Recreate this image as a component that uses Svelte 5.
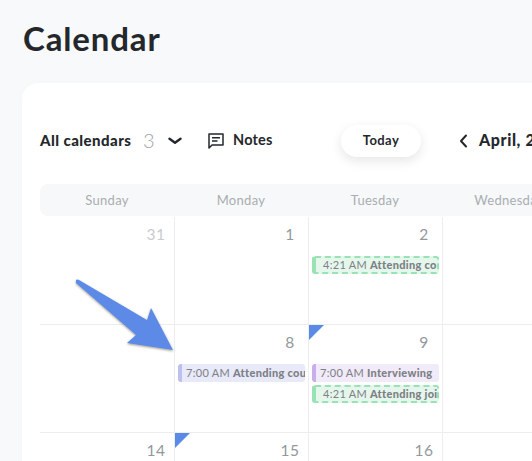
<script>
	const days = ['Sunday', 'Monday', 'Tuesday', 'Wednesday', 'Thursday', 'Friday', 'Saturday'];

	const weeks = [
		[
			{ num: 31, muted: true },
			{ num: 1 },
			{ num: 2, events: [{ kind: 'green', time: '4:21 AM', title: 'Attending conference' }] },
			{}, {}, {}, {}
		],
		[
			{},
			{ num: 8, events: [{ kind: 'blue', time: '7:00 AM', title: 'Attending council' }] },
			{
				num: 9,
				flag: true,
				events: [
					{ kind: 'purple', time: '7:00 AM', title: 'Interviewing' },
					{ kind: 'green', time: '4:21 AM', title: 'Attending joint' }
				]
			},
			{}, {}, {}, {}
		],
		[
			{ num: 14 },
			{ num: 15, flag: true },
			{ num: 16 },
			{}, {}, {}, {}
		]
	];
</script>

<div class="page">
	<h1>Calendar</h1>

	<div class="card">
		<div class="toolbar">
			<span class="all">All calendars</span>
			<span class="count">3</span>
			<svg class="chevron" width="14" height="8" viewBox="0 0 14 8" fill="none">
				<path d="M1.500 1.800 7 5.800l5.500-4" stroke="#24282c" stroke-width="2.400" stroke-linecap="round" stroke-linejoin="round" />
			</svg>
			<svg class="note-icon" width="16" height="16" viewBox="0 0 16 16" fill="none">
				<path d="M1 1h14v11H4l-3 3z" stroke="#24282c" stroke-width="1.500" stroke-linejoin="round" />
				<path d="M4 4.800h8M4 8h5.500" stroke="#24282c" stroke-width="1.400" />
			</svg>
			<span class="notes">Notes</span>
			<button class="today">Today</button>
			<svg class="prev" width="9" height="14" viewBox="0 0 9 14" fill="none">
				<path d="M7 1.500 2 7l5 5.500" stroke="#24282c" stroke-width="2" stroke-linecap="round" stroke-linejoin="round" />
			</svg>
			<span class="month">April, 2021</span>
		</div>

		<div class="day-head">
			{#each days as day}
				<div class="day">{day}</div>
			{/each}
		</div>

		{#each weeks as week}
			<div class="week">
				{#each week as cell}
					<div class="cell">
						{#if cell.flag}<span class="flag"></span>{/if}
						<div class="num" class:muted={cell.muted}><span>{cell.num ?? ''}</span></div>
						{#each cell.events ?? [] as ev}
							<div class="event {ev.kind}">
								<span class="time">{ev.time}</span>
								<b>{ev.title}</b>
							</div>
						{/each}
					</div>
				{/each}
			</div>
		{/each}
	</div>

	<svg class="arrow" width="110" height="80" viewBox="70 275 110 80">
		<defs>
			<filter id="arrow-shadow" x="-10%" y="-10%" width="120%" height="120%">
				<feDropShadow dx="0" dy="1" stdDeviation="0.800" flood-color="#3a3000" flood-opacity="0.500" />
			</filter>
		</defs>
		<path
			d="M76 280 Q77 279 79 280 L147 320 L151 308 L173 350 L127 343 L136 335 L76 283 Z"
			fill="#5b8ae6"
			filter="url(#arrow-shadow)"
		/>
	</svg>
</div>

<style>
	:global(body) {
		margin: 0;
		background: #f8f9fa;
		overflow: hidden;
	}

	.page {
		position: relative;
		width: 532px;
		height: 461px;
		overflow: hidden;
		padding: 17px 0 0 22px;
		box-sizing: border-box;
		font-family: Lato, 'Open Sans', sans-serif;
		color: #24282c;
	}

	h1 {
		margin: 0 0 24px 1px;
		font-size: 33px;
		line-height: 42px;
		font-weight: 700;
		letter-spacing: 0.85px;
	}

	.card {
		width: 1000px;
		height: 500px;
		background: #fff;
		border-radius: 16px;
		padding: 0 18px;
		box-sizing: border-box;
		box-shadow: 0 0 6px rgba(0, 0, 0, 0.02);
	}

	.toolbar {
		height: 101px;
		display: flex;
		align-items: center;
		white-space: nowrap;
		padding-top: 14px;
		box-sizing: border-box;
	}

	.all {
		font-size: 15px;
		font-weight: 900;
		letter-spacing: 0.45px;
		width: 103px;
		margin-top: -2px;
	}

	.count {
		font-size: 20px;
		color: #a0a5aa;
		font-weight: 300;
		width: 25px;
		margin-top: -2px;
	}

	.chevron {
		margin-right: 26px;
	}

	.note-icon {
		margin-right: 9px;
	}

	.notes {
		font-size: 14.500px;
		font-weight: 700;
		letter-spacing: 0.2px;
		width: 108px;
		margin-top: -2px;
	}

	.today {
		width: 80px;
		height: 32px;
		border: 0;
		border-radius: 16px;
		background: #fff;
		box-shadow: 0 4px 12px rgba(0, 0, 0, 0.1);
		font-family: inherit;
		font-size: 13px;
		font-weight: 700;
		letter-spacing: 0.4px;
		color: #24282c;
		margin-right: 38px;
		padding: 0 0 2px;
	}

	.prev {
		margin-right: 11px;
	}

	.month {
		font-size: 16px;
		font-weight: 900;
		letter-spacing: 0.6px;
		margin-top: -2px;
	}

	.day-head {
		display: grid;
		grid-template-columns: repeat(7, 134px);
		height: 32px;
		background: #f7f8f9;
		border-radius: 8px;
	}

	.day {
		font-size: 13px;
		line-height: 32px;
		text-align: center;
		color: #a9adb1;
		letter-spacing: 0.3px;
	}

	.week {
		display: grid;
		grid-template-columns: repeat(7, 134px);
		height: 108px;
		border-top: 1px solid #ebedee;
		box-sizing: border-box;
	}

	.day-head + .week {
		border-top-color: transparent;
	}

	.cell {
		position: relative;
		border-left: 1px solid #ebedee;
		padding: 8px 3px 0;
		box-sizing: border-box;
		min-width: 0;
	}

	.cell:first-child {
		border-left-color: transparent;
	}

	.num {
		display: flex;
		justify-content: flex-end;
		height: 19px;
		line-height: 19px;
		padding-right: 5px;
		margin-bottom: 12px;
		font-size: 15.500px;
		letter-spacing: 0.4px;
		color: #94989d;
	}

	.num span {
		width: 20px;
		text-align: center;
	}

	.num.muted {
		color: #c8cbce;
	}

	.flag {
		position: absolute;
		left: 0;
		top: 0;
		width: 0;
		height: 0;
		border-top: 15px solid #5b8ae6;
		border-right: 15px solid transparent;
	}

	.event {
		height: 18px;
		margin-bottom: 3px;
		border-radius: 3px;
		box-sizing: border-box;
		font-size: 11px;
		line-height: 18px;
		white-space: nowrap;
		overflow: hidden;
		color: #7d8084;
		padding-left: 4px;
	}

	.event b {
		font-weight: 900;
		letter-spacing: 0.3px;
	}

	.time {
		letter-spacing: 0.3px;
	}

	.blue {
		background: #e8e9f9;
		border-left: 4px solid #bcc0ee;
	}

	.purple {
		background: #f1eaf9;
		border-left: 4px solid #cbadec;
	}

	.green {
		background: #e5f7ec;
		border: 2px dashed #98e2b3;
		border-left: 4px solid #98e2b3;
		line-height: 14px;
		padding-left: 7px;
	}

	.arrow {
		position: absolute;
		left: 70px;
		top: 275px;
	}
</style>
